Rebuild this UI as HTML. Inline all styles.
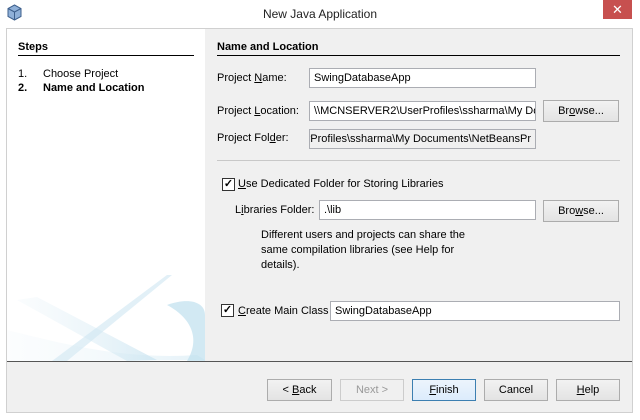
<!DOCTYPE html>
<html><head><style>
*{margin:0;padding:0;box-sizing:border-box}
body{width:640px;height:420px;background:#fff;font-family:"Liberation Sans",sans-serif;font-size:11px;color:#000;position:relative;overflow:hidden}
.a{position:absolute}
.inp{position:absolute;background:#fff;border:1px solid #abadb3;height:20px;padding:3px 4px;white-space:nowrap;overflow:hidden;font-size:11px}
.btn{position:absolute;background:linear-gradient(#f2f2f2,#e3e3e3);border:1px solid #acacac;height:22px;text-align:center;line-height:20px;font-size:11px}
.cb{position:absolute;width:13px;height:13px;border:1px solid #333;background:#fff;font-size:11px;line-height:11px;text-align:center;font-weight:bold}
u{text-decoration:underline}
</style></head><body>
<div class="a" style="left:0;top:0;width:640px;height:28px;background:#fff"></div>
<svg class="a" style="left:7px;top:4px" width="15" height="17" viewBox="0 0 15 17"><path d="M7.5 1 L14 4.5 V12.5 L7.5 16 L1 12.5 V4.5Z" fill="#8fb0d8" stroke="#3d5f8c"/><path d="M1 4.5 L7.5 8 L14 4.5 M7.5 8 V16" fill="none" stroke="#3d5f8c"/></svg>
<div class="a" style="left:0;top:7px;width:640px;text-align:center;font-size:12px;color:#222">New Java Application</div>
<div class="a" style="left:603px;top:0;width:29px;height:19px;background:#c7504f;color:#fff;text-align:center;font-size:13px;line-height:19px">✕</div>
<div class="a" style="left:6px;top:28px;width:627px;height:385px;border:1px solid #d0d0d0;background:#f0f0f0"></div>
<div class="a" style="left:7px;top:29px;width:198px;height:332px;background:#fff"></div>
<svg class="a" style="left:7px;top:270px" width="198" height="91" viewBox="0 0 198 91">
<defs><linearGradient id="g" x1="0" x2="1"><stop offset="0" stop-color="#e3f0f7" stop-opacity=".3"/><stop offset="1" stop-color="#bfdfee"/></linearGradient></defs>
<path d="M10 30 L30 27 L150 90 L120 91Z" fill="url(#g)" opacity=".6"/>
<path d="M160 5 L165 5 L60 91 L45 91Z" fill="#cfe6f1" opacity=".6"/>
<path d="M0 60 C60 75 120 90 190 85 L198 90 L0 91Z" fill="url(#g)" opacity=".4"/>
<path d="M160 35 C182 27 198 32 198 45 L198 91 L180 91 C192 72 188 50 160 35Z" fill="#bfdfee" opacity=".7"/>
</svg>
<div class="a" style="left:18px;top:41px;font-weight:bold">Steps</div>
<div class="a" style="left:18px;top:55px;width:176px;border-top:1px solid #000"></div>
<div class="a" style="left:18px;top:68px">1.</div><div class="a" style="left:43px;top:68px">Choose Project</div>
<div class="a" style="left:18px;top:82px;font-weight:bold">2.</div><div class="a" style="left:43px;top:82px;font-weight:bold">Name and Location</div>
<div class="a" style="left:217px;top:41px;font-weight:bold">Name and Location</div>
<div class="a" style="left:217px;top:55px;width:403px;border-top:1px solid #000"></div>
<div class="a" style="left:217px;top:72px">Project <u>N</u>ame:</div>
<div class="inp" style="left:309px;top:68px;width:227px">SwingDatabaseApp</div>
<div class="a" style="left:217px;top:105px">Project <u>L</u>ocation:</div>
<div class="inp" style="left:309px;top:101px;width:227px">\\MCNSERVER2\UserProfiles\ssharma\My Documents</div>
<div class="btn" style="left:543px;top:100px;width:76px">Br<u>o</u>wse...</div>
<div class="a" style="left:217px;top:132px">Project Fol<u>d</u>er:</div>
<div class="inp" style="left:309px;top:129px;width:227px;background:#f0f0f0;direction:rtl;text-align:left"><span style="direction:ltr;unicode-bidi:embed">\\MCNSERVER2\UserProfiles\ssharma\My Documents\NetBeansPr</span></div>
<div class="a" style="left:217px;top:160px;width:403px;border-top:1px solid #c8c8c8"></div>
<div class="cb" style="left:222px;top:178px">✓</div>
<div class="a" style="left:238px;top:178px"><u>U</u>se Dedicated Folder for Storing Libraries</div>
<div class="a" style="left:235px;top:204px">L<u>i</u>braries Folder:</div>
<div class="inp" style="left:319px;top:200px;width:217px">.\lib</div>
<div class="btn" style="left:543px;top:200px;width:76px">Bro<u>w</u>se...</div>
<div class="a" style="left:261px;top:228px;line-height:15px">Different users and projects can share the<br>same compilation libraries (see Help for<br>details).</div>
<div class="cb" style="left:221px;top:304px">✓</div>
<div class="a" style="left:238px;top:305px"><u>C</u>reate Main Class</div>
<div class="inp" style="left:330px;top:301px;width:290px">SwingDatabaseApp</div>
<div class="a" style="left:7px;top:361px;width:625px;border-top:1px solid #555"></div>
<div class="btn" style="left:267px;top:379px;width:65px">&lt; <u>B</u>ack</div>
<div class="btn" style="left:340px;top:379px;width:64px;color:#999;background:#f0f0f0;border-color:#ccc">Next &gt;</div>
<div class="btn" style="left:412px;top:379px;width:64px;border-color:#3c7fb1;background:linear-gradient(#ecf4fc,#dcecfc)"><u>F</u>inish</div>
<div class="btn" style="left:484px;top:379px;width:64px">Cancel</div>
<div class="btn" style="left:556px;top:379px;width:64px"><u>H</u>elp</div>
</body></html>
